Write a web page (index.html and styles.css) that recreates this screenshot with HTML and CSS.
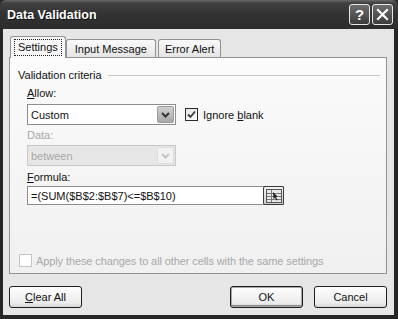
FILE: index.html
```html
<!DOCTYPE html>
<html lang="en">
<head>
  <meta charset="UTF-8">
  <title>Data Validation</title>
  <link rel="stylesheet" href="styles.css">
</head>
<body>
  <div class="window">
    <!-- title bar -->
    <div class="titlebar">
      <span class="title">Data Validation</span>
      <div class="caption-btns">
        <span class="cap-btn">?</span>
        <span class="cap-btn">
          <svg width="13" height="13" viewBox="0 0 13 13"><path d="M2 2 L11 11 M11 2 L2 11" stroke="#fff" stroke-width="2.2" stroke-linecap="square"/></svg>
        </span>
      </div>
    </div>

    <div class="client">
      <div class="tabs">
        <div class="tab active"><span class="focus">Settings</span></div>
        <div class="tab">Input Message</div>
        <div class="tab">Error Alert</div>
      </div>

      <div class="panel">
        <div class="group-title">
          <span>Validation criteria</span>
          <span class="rule"></span>
        </div>

        <div class="label"><u>A</u>llow:</div>
        <div class="row">
          <div class="select">
            <span class="value">Custom</span>
            <span class="drop">
              <svg width="9" height="6" viewBox="0 0 9 6"><path d="M1 1 L4.5 4.5 L8 1" fill="none" stroke="#333" stroke-width="2"/></svg>
            </span>
          </div>
          <label class="check">
            <span class="box checked">
              <svg width="9" height="9" viewBox="0 0 9 9"><path d="M1 4.5 L3.5 7 L8 1.5" fill="none" stroke="#3a3a3a" stroke-width="1.8"/></svg>
            </span>
            <span>Ignore <u>b</u>lank</span>
          </label>
        </div>

        <div class="label disabled">Data:</div>
        <div class="select off">
          <span class="value">between</span>
          <span class="drop">
            <svg width="9" height="6" viewBox="0 0 9 6"><path d="M1 1 L4.5 4.5 L8 1" fill="none" stroke="#c4c4c4" stroke-width="2"/></svg>
          </span>
        </div>

        <div class="label formula-label"><u>F</u>ormula:</div>
        <div class="formula">
          <span class="value">=(SUM($B$2:$B$7)&lt;=$B$10)</span>
          <span class="ref-btn">
            <svg width="16" height="14" viewBox="0 0 16 14">
              <rect x="0.5" y="0.5" width="15" height="13" fill="#e8e8e8" stroke="#555"/>
              <path d="M1 4.5 H15 M1 7.5 H15 M1 10.5 H15 M5.5 1 V13" stroke="#777" stroke-width="1"/>
              <path d="M7 3 L12 8 L10 8 L11.5 11 L10.3 11.5 L9 8.6 L7.5 10 Z" fill="#222"/>
            </svg>
          </span>
        </div>

        <div class="spacer"></div>

        <label class="check apply">
          <span class="box dim"></span>
          <span>Apply these changes to all other cells with the same settings</span>
        </label>
      </div>

      <div class="buttons">
        <button><u>C</u>lear All</button>
        <div class="right">
          <button class="default">OK</button>
          <button>Cancel</button>
        </div>
      </div>
    </div>
  </div>
</body>
</html>
```

FILE: styles.css
```css
* {
  margin: 0;
  padding: 0;
  box-sizing: border-box;
}

body {
  font-family: 'Liberation Sans', Arial, sans-serif;
  font-size: 11px;
  color: #111;
  background: #2a2a2a;
}

.window {
  width: 398px;
  height: 319px;
  display: flex;
  flex-direction: column;
  background: #262626;
  border-radius: 6px 6px 0 0;
  overflow: hidden;
}

/* 标题栏 */
.titlebar {
  height: 29px;
  flex: none;
  display: flex;
  align-items: center;
  justify-content: space-between;
  padding: 0 5px 0 7px;
  background: linear-gradient(#6a6a6a 0, #404040 3px, #333 14px, #2c2c2c 100%);
}

.title {
  color: #fff;
  font-weight: bold;
  font-size: 12.5px;
  text-shadow: 1px 1px 0 #111;
}

.caption-btns {
  display: flex;
  gap: 2px;
}

.cap-btn {
  width: 21px;
  height: 21px;
  border: 1px solid #e8e8e8;
  border-radius: 3px;
  background: linear-gradient(#6c6c6c, #3c3c3c);
  color: #fff;
  font-weight: bold;
  font-size: 15px;
  display: flex;
  align-items: center;
  justify-content: center;
}

/* 窗口内容 */
.client {
  flex: 1;
  margin: 0 4px 4px 3px;
  background: #e6e6e6;
  padding: 7px 7px 0 6px;
  display: flex;
  flex-direction: column;
}

.tabs {
  display: flex;
  align-items: flex-end;
  height: 21px;
  padding-left: 1px;
  position: relative;
  z-index: 1;
}

.tab {
  height: 18px;
  padding: 0 8px;
  border: 1px solid #929292;
  border-bottom: none;
  border-radius: 3px 3px 0 0;
  background: linear-gradient(#fafafa, #e4e4e4);
  display: flex;
  align-items: center;
  margin-right: 1px;
}

.tab + .tab {
  margin-left: -1px;
}

.tab.active {
  height: 22px;
  margin-bottom: -1px;
  background: #f8f8f8;
  padding: 0 3px;
  margin-right: 1px;
}

.focus {
  border: 1px dotted #222;
  padding: 0 3px;
  line-height: 15px;
}

.tab:nth-child(3) {
  margin-left: 1px;
  padding: 0 6px;
}

.panel {
  height: 217px;
  border: 1px solid #929292;
  background: linear-gradient(#fbfbfb, #f0f0f0);
  padding: 10px 6px 0 8px;
  display: flex;
  flex-direction: column;
}

.group-title {
  display: flex;
  align-items: center;
  gap: 6px;
  height: 14px;
}

.rule {
  flex: 1;
  border-top: 1px solid #c8c8c8;
}

.label {
  margin-left: 9px;
  margin-top: 4px;
  height: 14px;
  line-height: 14px;
}

.label.disabled {
  color: #a8a8a8;
  margin-top: 3px;
}

.row {
  display: flex;
  align-items: center;
  gap: 9px;
  margin-top: 4px;
}

.select {
  width: 149px;
  height: 21px;
  margin-left: 9px;
  border: 1px solid #8c8c8c;
  background: #fff;
  display: flex;
  align-items: stretch;
  padding: 1px;
}

.label + .select {
  margin-top: 3px;
}

.select .value {
  flex: 1;
  padding-left: 2px;
  display: flex;
  align-items: center;
}

.drop {
  width: 17px;
  border: 1px solid #9a9a9a;
  border-radius: 2px;
  background: linear-gradient(#cfcfcf, #a9a9a9);
  display: flex;
  align-items: center;
  justify-content: center;
}

.select.off {
  border-color: #c8c8c8;
  background: #e6e6e6;
  color: #a8a8a8;
}

.select.off .drop {
  border-color: #dcdcdc;
  background: #f2f2f2;
}

.check {
  display: flex;
  align-items: center;
  gap: 5px;
}

.box {
  width: 13px;
  height: 13px;
  border: 1px solid #2a2a2a;
  background: linear-gradient(135deg, #e2e2e2, #fff);
  display: flex;
  align-items: center;
  justify-content: center;
}

.box.dim {
  border-color: #c4c4c4;
  background: #fff;
}

.formula {
  width: 257px;
  height: 19px;
  margin: 2px 0 0 9px;
  border: 1px solid #8c8c8c;
  background: #fff;
  display: flex;
  align-items: center;
}

.formula .value {
  flex: 1;
  padding-left: 3px;
}

.ref-btn {
  width: 21px;
  height: 19px;
  margin-right: -1px;
  border: 1px solid #3a3a3a;
  border-radius: 2px;
  background: linear-gradient(#f4f4f4, #cfcfcf);
  display: flex;
  align-items: center;
  justify-content: center;
}

.spacer {
  flex: 1;
}

.apply {
  margin: 0 0 6px 1px;
  gap: 4px;
  color: #a8a8a8;
  letter-spacing: -0.1px;
}

/* 按钮 */
.buttons {
  display: flex;
  justify-content: space-between;
  margin-top: 12px;
}

.right {
  display: flex;
  gap: 11px;
}

button {
  font-family: 'Liberation Sans', Arial, sans-serif;
  font-size: 11px;
  color: #111;
  width: 73px;
  height: 22px;
  border: 1px solid #1e1e1e;
  border-radius: 3px;
  background: linear-gradient(#fefefe, #ececec 80%, #d4d4d4);
}

button.default {
  box-shadow: inset 0 0 0 1px #a8a8a8, inset 0 -1px 0 1px #8c8c8c;
}
```
